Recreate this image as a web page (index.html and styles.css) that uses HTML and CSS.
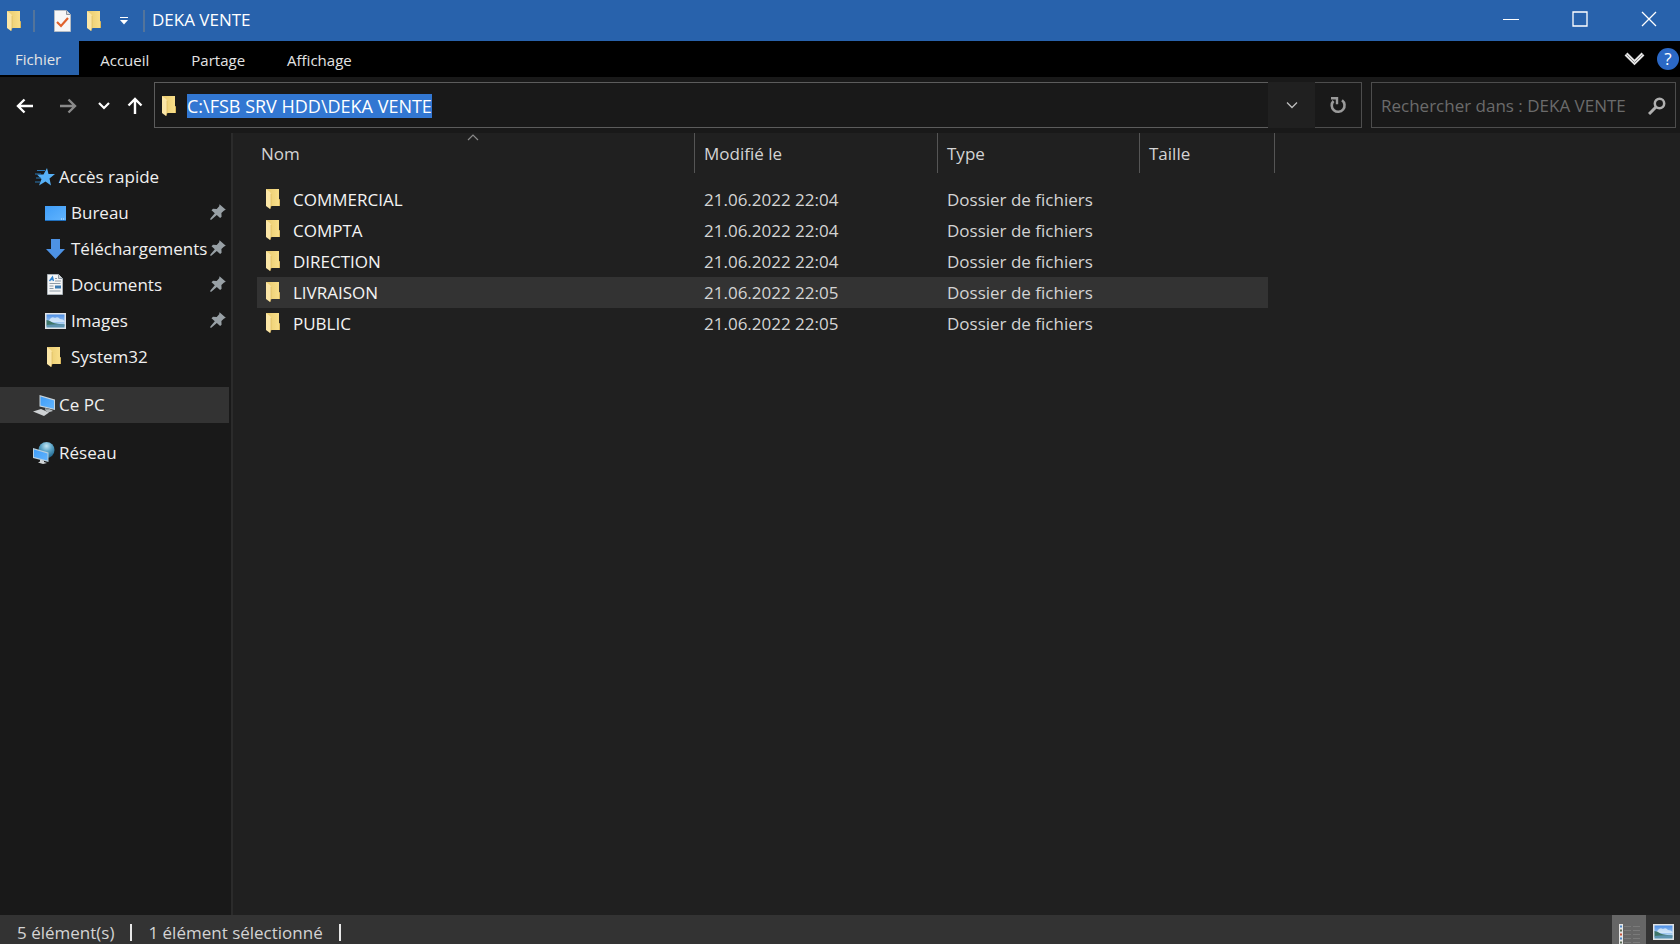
FILE: index.html
```
<!DOCTYPE html>
<html lang="fr">
<head>
    <meta charset="UTF-8">
    <meta name="viewport" content="width=device-width, initial-scale=1.0">
    <title>DEKA VENTE</title>
    <link rel="stylesheet" href="styles.css">
</head>
<body>
    <!-- shared icons -->
    <svg class="sprite" width="0" height="0" aria-hidden="true">
        <defs>
            <linearGradient id="gold" x1="0" x2="1" y1="0" y2="0">
                <stop offset="0" stop-color="#e9cb6e"/>
                <stop offset="1" stop-color="#fae08c"/>
            </linearGradient>
            <linearGradient id="screen" x1="0" x2="1" y1="0" y2="1">
                <stop offset="0" stop-color="#3f9df8"/>
                <stop offset="1" stop-color="#62b4fd"/>
            </linearGradient>
            <linearGradient id="sky" x1="0" x2="0" y1="0" y2="1">
                <stop offset="0" stop-color="#4d8fe6"/>
                <stop offset="1" stop-color="#d5ecfa"/>
            </linearGradient>
            <radialGradient id="globe" cx="0.5" cy="0.25" r="0.7">
                <stop offset="0" stop-color="#c3e6f3"/>
                <stop offset="0.5" stop-color="#5aa3c6"/>
                <stop offset="1" stop-color="#236a92"/>
            </radialGradient>
        </defs>
        <symbol id="folder" viewBox="0 0 15 22">
            <path d="M0 1h13v10l1 1v6H4z" fill="url(#gold)"/>
            <path d="M13 11l1 1v6h-1z" fill="#d9b75c"/>
            <path d="M0 1l4 3q1 1 1 3v11l-1 3L0 18z" fill="#fbe6a6"/>
            <path d="M5 6v12l-1 3" fill="none" stroke="#dcb95f" stroke-width="0.7"/>
        </symbol>
        <symbol id="pin" viewBox="0 0 16 16">
            <path d="M9.500 .2l6.300 5.600-1.700.7-2.700 2.600.2 3.600-1.500 1.300-3.300-3L1.300 15.700.2 15.800l.2-1.300 4.400-5.300L1.500 6.300 3 4.800l3.700.1 2.500-2.700z" fill="#98a0a5"/>
        </symbol>
        <symbol id="picture" viewBox="0 0 21 16">
            <path d="M0 0h21v16H0z" fill="#dfe3e6"/>
            <path d="M1.500 1.500h18v13h-18z" fill="url(#sky)"/>
            <path d="M5 6q2-3 5-1 3-2 5 1 3 0 4.500 2v1H3z" fill="#e9f5fc" opacity=".7"/>
            <path d="M1.500 7q3 0 6 2.500 4 1.500 12 2v1h-18z" fill="#3f7669"/>
            <path d="M1.500 12q8-1 18-.5v3h-18z" fill="#5d93b0"/>
        </symbol>
    </svg>

    <header class="titlebar">
        <svg class="folder-icon"><use href="#folder"/></svg>
        <span class="sep"></span>
        <button class="quick" aria-label="Propriétés">
            <svg width="17" height="22" viewBox="0 0 17 22">
                <path d="M.5.500h12l4 4v17H.5z" fill="#f7f7f7" stroke="#b5bcc5"/>
                <path d="M12.500.5v4h4" fill="#d5d9de" stroke="#8b939e"/>
                <path d="M3 12l4 4 7-8" fill="none" stroke="#e0622c" stroke-width="2.200"/>
            </svg>
        </button>
        <button class="quick" aria-label="Nouveau dossier"><svg class="folder-icon"><use href="#folder"/></svg></button>
        <button class="quick small" aria-label="Personnaliser">
            <svg width="10" height="8" viewBox="0 0 10 8"><path d="M1 .5h8" stroke="#fff"/><path d="M1 3h8L5 7.500z" fill="#fff"/></svg>
        </button>
        <span class="sep"></span>
        <h1>DEKA VENTE</h1>
        <div class="window-buttons">
            <button aria-label="Réduire"><svg width="16" height="16"><path d="M0 8.500h16" stroke="#fff"/></svg></button>
            <button aria-label="Agrandir"><svg width="16" height="16"><path d="M1 1h14v14H1z" fill="none" stroke="#fff" stroke-width="1.300"/></svg></button>
            <button aria-label="Fermer"><svg width="16" height="16"><path d="M1 1l14 14M15 1L1 15" stroke="#fff" stroke-width="1.300"/></svg></button>
        </div>
    </header>

    <nav class="ribbon">
        <button class="file">Fichier</button>
        <button>Accueil</button>
        <button>Partage</button>
        <button>Affichage</button>
        <div class="ribbon-end">
            <button aria-label="Développer le ruban">
                <svg width="21" height="14" viewBox="0 0 21 14">
                    <path d="M2 2l8.500 8.500L19 2" fill="none" stroke="#e4e4e4" stroke-width="4"/>
                    <path d="M2.500 2.500l8 8 8-8" fill="none" stroke="#8c8c8c" stroke-width="1"/>
                </svg>
            </button>
            <button class="help" aria-label="Aide">?</button>
        </div>
    </nav>

    <div class="toolbar">
        <div class="history">
            <button aria-label="Précédent"><svg width="18" height="16"><path d="M17 8H2M8.500 1.500L2 8l6.500 6.500" fill="none" stroke="#fff" stroke-width="2.400"/></svg></button>
            <button aria-label="Suivant"><svg width="18" height="16"><path d="M1 8h15M9.500 1.500L16 8l-6.500 6.500" fill="none" stroke="#8a8a8a" stroke-width="2.400"/></svg></button>
            <button class="recent" aria-label="Emplacements récents"><svg width="12" height="8"><path d="M1 1l5 5 5-5" fill="none" stroke="#fff" stroke-width="2.200"/></svg></button>
            <button class="up" aria-label="Dossier parent"><svg width="16" height="18"><path d="M8 17V2M1.500 8.500L8 2l6.500 6.500" fill="none" stroke="#fff" stroke-width="2.400"/></svg></button>
        </div>
        <div class="address">
            <div class="path">
                <svg class="folder-icon"><use href="#folder"/></svg>
                <input type="text" id="path" aria-label="Adresse" value="C:\FSB SRV HDD\DEKA VENTE" spellcheck="false">
            </div>
            <button class="drop" aria-label="Adresses précédentes"><svg width="12" height="8"><path d="M1 1.500l5 5 5-5" fill="none" stroke="#bdbdbd" stroke-width="1.300"/></svg></button>
            <button class="refresh" aria-label="Actualiser">
                <svg width="18" height="18" viewBox="0 0 18 18">
                    <path d="M13 4.300A6.400 6.400 0 1 1 4.500 5" fill="none" stroke="#9a9a9a" stroke-width="2.600"/>
                    <path d="M2 2.200h6v6" fill="none" stroke="#9a9a9a" stroke-width="2.400"/>
                </svg>
            </button>
        </div>
        <div class="search">
            <input type="text" aria-label="Rechercher" placeholder="Rechercher dans : DEKA VENTE">
            <svg width="18" height="18"><circle cx="11.500" cy="6.500" r="4.700" fill="none" stroke="#b0b0b0" stroke-width="2.500"/><path d="M8 10l-7 7" stroke="#b0b0b0" stroke-width="3"/></svg>
        </div>
    </div>

    <div class="content">
        <aside class="sidebar">
            <ul>
                <li><a href="#">
                    <svg width="22" height="18" viewBox="0 0 22 18">
                        <path d="M14 0l1.500 6H22l-5.500 4.500 1.500 7-5.500-4L6 17.500l2.500-6.500L4 6.500h6.500z" fill="#56b0f6"/>
                        <path d="M4 2.500h8M2 6h6M3 10h5M2 14h5" stroke="#2b78b4" stroke-width="1"/>
                    </svg>
                    <span>Accès rapide</span></a>
                    <ul>
                        <li><a href="#">
                            <svg width="21" height="15"><path d="M0 0h21v15H0z" fill="url(#screen)"/><path d="M0 14.500h21" stroke="#1f6fbd"/><path d="M16 13h1M18 13h1" stroke="#d5ebff"/></svg>
                            <span>Bureau</span><svg class="pin"><use href="#pin"/></svg></a></li>
                        <li><a href="#">
                            <svg width="21" height="20"><path d="M6 0h9v10h5l-9.500 10L1 10h5z" fill="#4d92e4"/></svg>
                            <span>Téléchargements</span><svg class="pin"><use href="#pin"/></svg></a></li>
                        <li><a href="#">
                            <svg width="21" height="22">
                                <path d="M2.500.500h11l4 4v16h-15z" fill="#f4f5f6" stroke="#aab2b8"/>
                                <path d="M13.500.5v4h4" fill="#cfd5da" stroke="#8e979f"/>
                                <path d="M4.500 7l3-4 1 4M6 5.500h2" fill="none" stroke="#2f83cf" stroke-width="1.300"/>
                                <path d="M10 4.500h2M10 7h6M4.500 9.500h11M4.500 12h4M4.500 14.500h4M4.500 17h11" stroke="#8e9ba7"/>
                                <path d="M10 11.500h6v3h-6z" fill="#3b7bb3"/>
                            </svg>
                            <span>Documents</span><svg class="pin"><use href="#pin"/></svg></a></li>
                        <li><a href="#">
                            <svg width="21" height="16"><use href="#picture"/></svg>
                            <span>Images</span><svg class="pin"><use href="#pin"/></svg></a></li>
                        <li><a href="#">
                            <svg width="21" height="22"><use href="#folder" x="2" width="15" height="22"/></svg>
                            <span>System32</span></a></li>
                    </ul>
                </li>
                <li><a href="#" class="current">
                    <svg width="22" height="21" viewBox="0 0 22 21">
                        <path d="M6.500 0L22 4.500V15L6.500 11.500z" fill="#c8d4dc"/>
                        <path d="M7.500 1.500L21 5.500v8.300L7.500 10.500z" fill="url(#screen)"/>
                        <path d="M12 13l5 1v2l-5-1z" fill="#8e979d"/>
                        <path d="M0 16.500l8-2.500 8 3.500-5 3.500z" fill="#cfd2d4"/>
                        <path d="M12 15l6-.5 2 1.500-5 1.500z" fill="#b5babd"/>
                    </svg>
                    <span>Ce PC</span></a></li>
                <li><a href="#">
                    <svg width="22" height="22" viewBox="0 0 22 22">
                        <circle cx="13.500" cy="8" r="8" fill="url(#globe)"/>
                        <path d="M0 6l15.500 4.500V20L0 16z" fill="#b8cfde"/>
                        <path d="M1 7.500l13.500 4v7L1 15z" fill="url(#screen)"/>
                        <path d="M7 17.500l4 1v1.500l3 1-4 1-5-1.500 2-1z" fill="#d0d5d8"/>
                    </svg>
                    <span>Réseau</span></a></li>
            </ul>
        </aside>

        <main class="files">
            <table>
                <colgroup>
                    <col class="col-name"><col class="col-date"><col class="col-type"><col class="col-size">
                </colgroup>
                <thead>
                    <tr>
                        <th>Nom<svg class="sort" width="12" height="7"><path d="M1 6l5-5 5 5" fill="none" stroke="#8a8a8a" stroke-width="1.200"/></svg></th>
                        <th>Modifié le</th>
                        <th>Type</th>
                        <th>Taille</th>
                    </tr>
                </thead>
                <tbody>
                    <tr><td><div class="name"><svg class="folder-icon"><use href="#folder"/></svg>COMMERCIAL</div></td><td>21.06.2022 22:04</td><td>Dossier de fichiers</td><td></td></tr>
                    <tr><td><div class="name"><svg class="folder-icon"><use href="#folder"/></svg>COMPTA</div></td><td>21.06.2022 22:04</td><td>Dossier de fichiers</td><td></td></tr>
                    <tr><td><div class="name"><svg class="folder-icon"><use href="#folder"/></svg>DIRECTION</div></td><td>21.06.2022 22:04</td><td>Dossier de fichiers</td><td></td></tr>
                    <tr class="selected"><td><div class="name"><svg class="folder-icon"><use href="#folder"/></svg>LIVRAISON</div></td><td>21.06.2022 22:05</td><td>Dossier de fichiers</td><td></td></tr>
                    <tr><td><div class="name"><svg class="folder-icon"><use href="#folder"/></svg>PUBLIC</div></td><td>21.06.2022 22:05</td><td>Dossier de fichiers</td><td></td></tr>
                </tbody>
            </table>
        </main>
    </div>

    <footer class="statusbar">
        <span>5 élément(s)</span>
        <span>1 élément sélectionné</span>
        <div class="views">
            <button class="active" aria-label="Détails">
                <svg width="21" height="22">
                    <path d="M0 0h4v22H0z" fill="#e6e6e6"/>
                    <path d="M1 2.500h2M1 14.500h2" stroke="#4d86c6" stroke-width="2"/>
                    <path d="M1 6.500h2M1 18.500h2" stroke="#5a6b56" stroke-width="2"/>
                    <path d="M1 10.500h2" stroke="#c8553a" stroke-width="2"/>
                    <path d="M5 2.500h7M14 2.500h7M5 6.500h7M14 6.500h7M5 10.500h7M14 10.500h7M5 14.500h7M14 14.500h7M5 18.500h7M14 18.500h7" stroke="#7a7a7a"/>
                </svg>
            </button>
            <button aria-label="Grandes icônes"><svg width="21" height="16"><use href="#picture"/></svg></button>
        </div>
    </footer>

    <script>
        document.getElementById('path').focus();
        document.getElementById('path').select();
    </script>
</body>
</html>
```
FILE: styles.css
```
* {
    box-sizing: border-box;
}
body {
    margin: 0;
    height: 100vh;
    display: flex;
    flex-direction: column;
    overflow: hidden;
    background-color: #202020;
    color: #e4e4e4;
    font-family: "Open Sans", "Noto Sans", sans-serif;
    font-size: 17px;
    line-height: 24px;
}
button {
    display: flex;
    align-items: center;
    justify-content: center;
    padding: 0;
    border: none;
    background: none;
    color: inherit;
    font: inherit;
}
input {
    min-width: 0;
    flex: 1;
    padding: 0;
    border: none;
    outline: none;
    background: none;
    color: #fff;
    font: inherit;
}
svg {
    display: block;
    flex: none;
}
.sprite {
    position: absolute;
}
.folder-icon {
    width: 15px;
    height: 22px;
}

/* title bar */
.titlebar {
    display: flex;
    align-items: center;
    height: 41px;
    padding-left: 7px;
    background-color: #2862ac;
    color: #fff;
}
.titlebar h1 {
    margin: 0 0 0 7px;
    padding-bottom: 2px;
    font-size: 17px;
    font-weight: normal;
}
.sep {
    width: 2px;
    height: 22px;
    margin-left: 11px;
    background-color: #53749b;
}
.quick {
    margin-left: 16px;
}
.sep + .quick {
    margin-left: 19px;
}
.small {
    margin-left: 17px;
}
.small + .sep {
    margin-left: 14px;
}
.window-buttons {
    display: flex;
    align-self: stretch;
    gap: 7px;
    margin-left: auto;
    padding-bottom: 3px;
}
.window-buttons button {
    width: 62px;
}

/* ribbon tabs */
.ribbon {
    display: flex;
    height: 36px;
    background-color: #000;
    font-size: 15px;
}
.ribbon button {
    padding: 2px 21px 0;
}
.ribbon .file {
    height: 34px;
    padding: 2px 18px 0 15px;
    background-color: #2862ac;
}
.ribbon-end {
    display: flex;
    align-items: center;
    gap: 12px;
    margin-left: auto;
    padding-right: 1px;
}
.ribbon .ribbon-end button {
    padding: 0;
}
.ribbon .help {
    width: 22px;
    height: 22px;
    border-radius: 50%;
    background-color: #2b68c5;
    color: #fff;
    font-size: 17px;
}

/* address row */
.toolbar {
    display: flex;
    height: 56px;
    padding: 5px 4px;
    background-color: #191919;
}
.history {
    display: flex;
    width: 150px;
    padding: 2px 0 0 12px;
    gap: 25px;
}
.history .recent {
    margin-left: -4px;
}
.history .up {
    margin-left: -8px;
}
.address {
    display: flex;
    flex: 1;
    margin-right: 9px;
}
.path {
    display: flex;
    align-items: center;
    flex: 1;
    gap: 10px;
    padding: 2px 0 0 7px;
    border: 1px solid #5c5c5c;
    border-right: none;
}
.path input {
    font-size: 18px;
}
.path input::selection {
    background-color: #3277d2;
    color: #fff;
}
.drop {
    width: 47px;
    background-color: #202020;
}
.refresh {
    width: 47px;
    border: 1px solid #4d4d4d;
    border-left: none;
}
.search {
    display: flex;
    align-items: center;
    width: 305px;
    padding: 2px 9px 0;
    border: 1px solid #4d4d4d;
}
.search input::placeholder {
    color: #6b6b6b;
    opacity: 1;
}

/* navigation pane */
.content {
    display: flex;
    flex: 1;
    min-height: 0;
}
.sidebar {
    width: 233px;
    padding: 26px 2px 0 0;
    border-right: 2px solid #2b2b2b;
    background-color: #191919;
}
.sidebar ul {
    margin: 0;
    padding: 0;
    list-style: none;
}
.sidebar > ul > li {
    margin-bottom: 12px;
}
.sidebar a {
    display: flex;
    align-items: center;
    height: 36px;
    padding-left: 33px;
    gap: 4px;
    color: #f0f0f0;
    text-decoration: none;
}
.sidebar ul ul a {
    padding-left: 45px;
    gap: 5px;
}
.sidebar span {
    flex: 1;
    white-space: nowrap;
}
.sidebar .current {
    background-color: #333;
}
.sidebar .pin {
    width: 16px;
    height: 16px;
    margin: 0 3px 2px -3px;
}

/* file list */
.files {
    flex: 1;
    padding-left: 24px;
    overflow: hidden;
}
table {
    table-layout: fixed;
    width: 1018px;
    border-spacing: 0;
}
.col-name {
    width: 438px;
}
.col-date {
    width: 243px;
}
.col-type {
    width: 202px;
}
.col-size {
    width: 135px;
}
th {
    position: relative;
    height: 40px;
    padding: 2px 9px 0;
    border-right: 1px solid #555;
    color: #d4d4d4;
    font-weight: normal;
    text-align: left;
}
th:first-child {
    padding-left: 4px;
}
.sort {
    position: absolute;
    top: 1px;
    left: 210px;
}
tbody::before {
    content: "";
    display: block;
    height: 11px;
}
td {
    height: 31px;
    padding: 0 9px;
    color: #d4d4d4;
}
td:last-child {
    border-right: 7px solid #202020;
}
.name {
    display: flex;
    align-items: center;
    gap: 12px;
    color: #f4f4f4;
}
.name .folder-icon {
    margin-bottom: 2px;
}
.selected td {
    background-color: #333;
}

/* status bar */
.statusbar {
    display: flex;
    height: 29px;
    padding-left: 17px;
    overflow: hidden;
    background-color: #333;
    color: #d4d4d4;
}
.statusbar span {
    height: 17px;
    margin: 9px 16px 0 0;
    padding-right: 16px;
    border-right: 2px solid #e8e8e8;
    line-height: 18px;
}
.views {
    display: flex;
    margin-left: auto;
}
.views button {
    align-items: flex-start;
    width: 34px;
    padding-top: 9px;
}
.views .active {
    background-color: #666;
}
```
